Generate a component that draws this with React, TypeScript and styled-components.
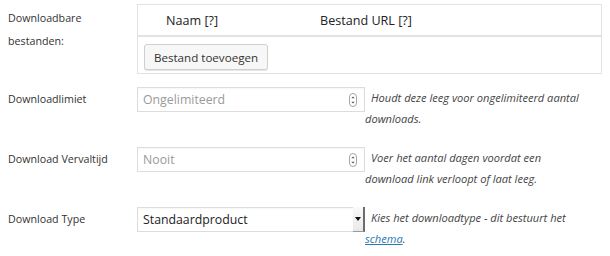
import React from "react";
import styled, { createGlobalStyle } from "styled-components";

const GlobalStyle = createGlobalStyle`
  html, body {
    margin: 0;
    padding: 0;
    background: #fff;
  }
  body {
    font-family: "Open Sans", "Liberation Sans", sans-serif;
    color: #333;
    -webkit-font-smoothing: antialiased;
  }
`;

const Form = styled.div`
  width: 610px;
  height: 256px;
  display: flex;
  flex-direction: column;
  box-sizing: border-box;
  padding-top: 4px;
`;

const Row = styled.div<{ $height: number }>`
  display: flex;
  align-items: flex-start;
  height: ${p => p.$height}px;
`;

const Label = styled.div<{ $pad?: number }>`
  width: 137px;
  flex: none;
  box-sizing: border-box;
  padding-left: 8px;
  padding-top: ${p => p.$pad ?? 0}px;
  font-size: 10.7px;
  line-height: 23px;
  color: #333;
`;

const FilesTable = styled.div`
  width: 465px;
  height: 70px;
  box-sizing: border-box;
  border: 1px solid #e2e2e2;
  display: flex;
  flex-direction: column;
`;

const TableHead = styled.div`
  display: grid;
  grid-template-columns: 28px 154px 1fr;
  height: 30px;
  align-items: center;
  border-bottom: 2px solid #e2e2e2;
  font-size: 12.6px;
  color: #222;
`;

const TableBody = styled.div`
  padding: 7px 0 0 6px;
`;

const Button = styled.button`
  font-family: "Open Sans", "Liberation Sans", sans-serif;
  font-size: 11.6px;
  color: #333;
  height: 26px;
  width: 124px;
  padding: 0;
  background: #f7f7f7;
  border: 1px solid #cfcfcf;
  border-radius: 3px;
  box-shadow: 0 1px 0 #e6e6e6;
`;

const Field = styled.div`
  position: relative;
  width: 228px;
  height: 25px;
  flex: none;
  box-sizing: border-box;
  border: 1px solid #ddd;
  box-shadow: inset 0 1px 2px rgba(0, 0, 0, 0.04);
  background: #fff;
  display: flex;
  align-items: center;
  padding-left: 5px;
  font-size: 12.3px;
`;

const Placeholder = styled.span`
  color: #9a9a9a;
`;

const Value = styled.span`
  color: #222;
`;

const Spinner = styled.svg`
  position: absolute;
  right: 7px;
  top: 5px;
`;

const SelectArrow = styled.div`
  position: absolute;
  right: -1px;
  top: -1px;
  bottom: -1px;
  width: 12px;
  box-sizing: border-box;
  border-right: 2px solid #6d6d6d;
  border-bottom: 1px solid #9a9a9a;
  background: linear-gradient(#fafafa, #e9e9e9);
  display: flex;
  align-items: center;
  justify-content: center;

  &::after {
    content: "";
    border-left: 3px solid transparent;
    border-right: 3px solid transparent;
    border-top: 4px solid #111;
  }
`;

const Help = styled.div`
  flex: 1;
  padding: 1px 20px 0 0;
  text-indent: 6px;
  font-size: 11.1px;
  line-height: 20.5px;
  font-style: italic;
  color: #444;
`;

const Link = styled.a`
  color: #2a7ab0;
  text-decoration: underline;
`;

function NumberSpinner() {
  return (
    <Spinner width="8" height="14" viewBox="0 0 8 14">
      <rect x="0.5" y="0.5" width="7" height="13" rx="3.5" fill="#fff" stroke="#a5a5a5" />
      <path d="M2.3 5.3 L4 3.6 L5.7 5.3 Z" fill="#555" />
      <path d="M2.3 8.7 L4 10.4 L5.7 8.7 Z" fill="#555" />
    </Spinner>
  );
}

export default function App() {
  return (
    <>
      <GlobalStyle />
      <Form>
        <Row $height={83}>
          <Label $pad={3}>
            Downloadbare
            <br />
            bestanden:
          </Label>
          <FilesTable>
            <TableHead>
              <span />
              <span>Naam [?]</span>
              <span>Bestand URL [?]</span>
            </TableHead>
            <TableBody>
              <Button>Bestand toevoegen</Button>
            </TableBody>
          </FilesTable>
        </Row>
        <Row $height={60}>
          <Label $pad={1}>Downloadlimiet</Label>
          <Field>
            <Placeholder>Ongelimiteerd</Placeholder>
            <NumberSpinner />
          </Field>
          <Help>Houdt deze leeg voor ongelimiteerd aantal downloads.</Help>
        </Row>
        <Row $height={60}>
          <Label $pad={1}>Download Vervaltijd</Label>
          <Field>
            <Placeholder>Nooit</Placeholder>
            <NumberSpinner />
          </Field>
          <Help>Voer het aantal dagen voordat een download link verloopt of laat leeg.</Help>
        </Row>
        <Row $height={49}>
          <Label $pad={1}>Download Type</Label>
          <Field>
            <Value>Standaardproduct</Value>
            <SelectArrow />
          </Field>
          <Help>
            Kies het downloadtype - dit bestuurt het <Link href="#">schema</Link>.
          </Help>
        </Row>
      </Form>
    </>
  );
}
